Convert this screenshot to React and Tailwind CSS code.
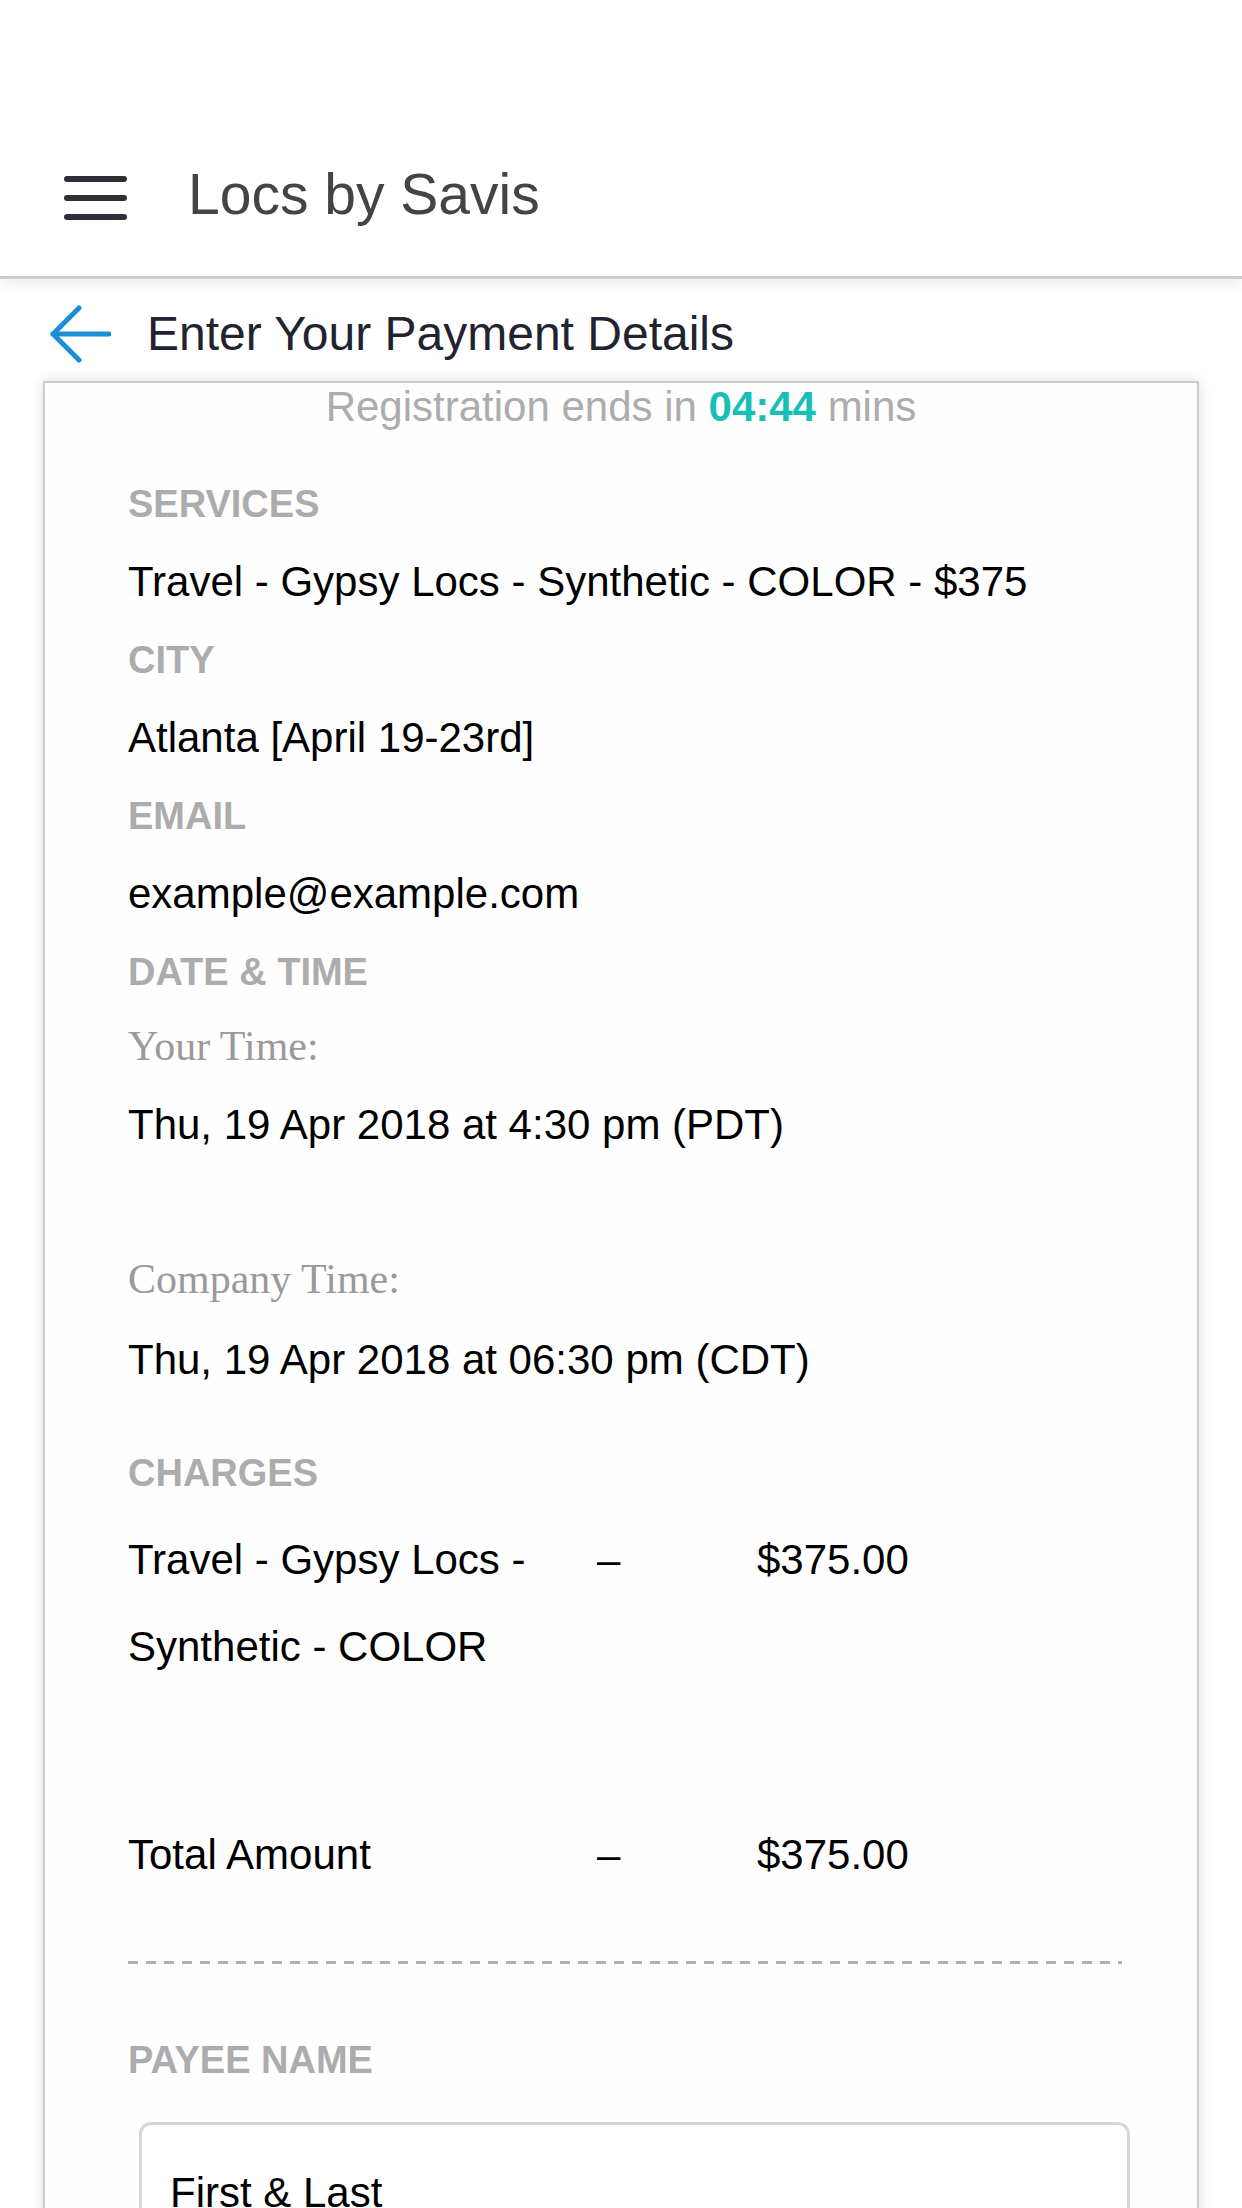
import React from 'react';

const sans = { fontFamily: '"Liberation Sans", Arial, Helvetica, sans-serif' };

function Label({ children, className = '' }) {
  return (
    <div className={`text-[38px] leading-[78px] font-bold text-[#acacac] ${className}`}>
      {children}
    </div>
  );
}

function Value({ children, className = '' }) {
  return <div className={`text-[42px] leading-[78px] text-black ${className}`}>{children}</div>;
}

function TimeLabel({ children, className = '' }) {
  return (
    <div className={`font-['Liberation_Serif',serif] text-[42px] leading-[70px] text-[#9a9a9a] ${className}`}>
      {children}
    </div>
  );
}

function ChargeRow({ item, amount, className = '' }) {
  return (
    <div className={`grid grid-cols-[469px_160px_1fr] text-[42px] leading-[87px] text-black ${className}`}>
      <div className="pr-[40px]">{item}</div>
      <div>–</div>
      <div>{amount}</div>
    </div>
  );
}

export default function App() {
  return (
    <div className="min-h-screen bg-white overflow-hidden" style={sans}>
      {/* top bar */}
      <header className="relative z-10 h-[279px] bg-white border-b-[3px] border-[#cccccc] shadow-[0_6px_14px_rgba(0,0,0,0.07)] flex items-center pt-[114px] pl-[64px]">
        <button className="flex flex-col gap-[13px] mt-[6px]" aria-label="Menu">
          <span className="block w-[63px] h-[6px] rounded-full bg-[#2d3036]" />
          <span className="block w-[63px] h-[6px] rounded-full bg-[#2d3036]" />
          <span className="block w-[63px] h-[6px] rounded-full bg-[#2d3036]" />
        </button>
        <h1 className="ml-[61px] text-[57px] leading-[1.15] text-[#444444]">Locs by Savis</h1>
      </header>

      {/* page title */}
      <div className="flex items-center pt-[26px] pl-[49px]">
        <svg width="62" height="58" viewBox="0 0 62 58" fill="none" stroke="#1a8fd5" strokeWidth="5" strokeLinecap="round" strokeLinejoin="round">
          <path d="M60 29H4" />
          <path d="M30 3L4 29l26 26" />
        </svg>
        <h2 className="ml-[36px] text-[48px] leading-[1.15] text-[#1f2430]">Enter Your Payment Details</h2>
      </div>

      {/* details card */}
      <div className="ml-[43px] mt-[18px] w-[1156px] bg-[#fefefe] border-2 border-[#cccccc] shadow-[0_0_12px_rgba(0,0,0,0.14)] pb-[200px]">
        <p className="text-center text-[42px] leading-[1.15] text-[#acacac]">
          Registration ends in <span className="font-bold text-[#18bfb7]">04:44</span> mins
        </p>

        <div className="pl-[83px] mt-[34px]">
          <Label>SERVICES</Label>
          <Value>Travel - Gypsy Locs - Synthetic - COLOR - $375</Value>
          <Label>CITY</Label>
          <Value>Atlanta [April 19-23rd]</Value>
          <Label>EMAIL</Label>
          <Value>example@example.com</Value>
          <Label>DATE &amp; TIME</Label>
          <TimeLabel>Your Time:</TimeLabel>
          <Value className="leading-[88px]">Thu, 19 Apr 2018 at 4:30 pm (PDT)</Value>
          <TimeLabel className="mt-[75px]">Company Time:</TimeLabel>
          <Value className="leading-[88px] mt-[2px]">Thu, 19 Apr 2018 at 06:30 pm (CDT)</Value>

          <Label className="mt-[30px]">CHARGES</Label>
          <ChargeRow className="mt-[4px]" item="Travel - Gypsy Locs - Synthetic - COLOR" amount="$375.00" />
          <ChargeRow className="mt-[121px]" item="Total Amount" amount="$375.00" />

          <div className="mt-[63px] w-[994px] h-[3px] bg-[repeating-linear-gradient(to_right,#b0b0b0_0px,#b0b0b0_10px,transparent_10px,transparent_18px)]" />

          <Label className="mt-[57px]">PAYEE NAME</Label>
          <input
            type="text"
            placeholder="First & Last"
            className="mt-[23px] ml-[11px] block w-[991px] h-[142px] px-[28px] rounded-[12px] border-[3px] border-[#d6d6d6] bg-white text-[42px] text-black placeholder:text-black outline-none"
          />
        </div>
      </div>
    </div>
  );
}
